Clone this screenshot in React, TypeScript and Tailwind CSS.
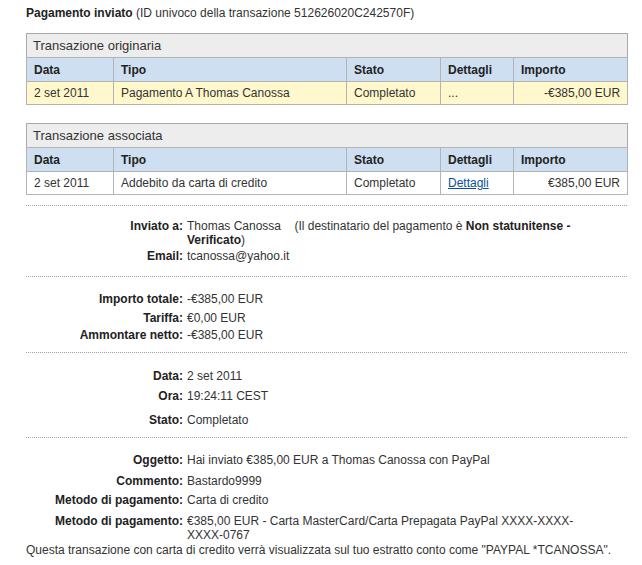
import type { ReactNode } from "react";

type Tx = {
  data: string;
  tipo: string;
  stato: string;
  dettagli: ReactNode;
  importo: string;
};

const cols = ["w-[87px]", "w-[233px]", "w-[94px]", "w-[73px]", "w-[114px]"];

function TxTable({ title, row, rowBg }: { title: string; row: Tx; rowBg: string }) {
  return (
    <table className="w-[601px] border-collapse table-fixed border border-[#a9a9a9]">
      <colgroup>
        {cols.map((c, i) => (
          <col key={i} className={c} />
        ))}
      </colgroup>
      <thead>
        <tr className="h-[24px] bg-[#ededed]">
          <th colSpan={5} className="text-left font-normal text-[13px] pl-[6px] text-[#333]">
            {title}
          </th>
        </tr>
        <tr className="h-[24px] bg-[#cddff0] text-[12px] text-[#222]">
          {["Data", "Tipo", "Stato", "Dettagli", "Importo"].map((h) => (
            <th key={h} className="text-left font-bold pl-[7px] border border-[#b3b3b3]">
              {h}
            </th>
          ))}
        </tr>
      </thead>
      <tbody>
        <tr className={"h-[23px] text-[12px] text-[#333] " + rowBg}>
          <td className="pl-[7px] border border-[#b3b3b3]">{row.data}</td>
          <td className="pl-[7px] border border-[#b3b3b3]">{row.tipo}</td>
          <td className="pl-[7px] border border-[#b3b3b3]">{row.stato}</td>
          <td className="pl-[7px] border border-[#b3b3b3]">{row.dettagli}</td>
          <td className="pr-[7px] text-right border border-[#b3b3b3]">{row.importo}</td>
        </tr>
      </tbody>
    </table>
  );
}

function Field({ label, children, className = "" }: { label: string; children: ReactNode; className?: string }) {
  return (
    <div className={"grid grid-cols-[157px_400px] gap-x-[4px] leading-[14px] " + className}>
      <div className="text-right font-bold text-[#222]">{label}</div>
      <div className="text-[#333]">{children}</div>
    </div>
  );
}

function Divider() {
  return <div className="w-[601px] border-t border-dotted border-[#a3a3a3]" />;
}

export default function App() {
  return (
    <div className="bg-white min-h-[565px] w-[642px] font-['Liberation_Sans',Arial,sans-serif] text-[12px] text-[#333]">
      <div className="pl-[26px] pt-[6px]">
        <div className="leading-[14px] text-[#222]">
          <span className="font-bold">Pagamento inviato</span>{" "}
          <span className="text-[#333]">(ID univoco della transazione 512626020C242570F)</span>
        </div>

        <div className="mt-[13px]">
          <TxTable
            title="Transazione originaria"
            rowBg="bg-[#fff8cc]"
            row={{
              data: "2 set 2011",
              tipo: "Pagamento A Thomas Canossa",
              stato: "Completato",
              dettagli: "...",
              importo: "-€385,00 EUR",
            }}
          />
        </div>

        <div className="mt-[18px]">
          <TxTable
            title="Transazione associata"
            rowBg="bg-white"
            row={{
              data: "2 set 2011",
              tipo: "Addebito da carta di credito",
              stato: "Completato",
              dettagli: (
                <a href="#" className="text-[#084f9c] underline">
                  Dettagli
                </a>
              ),
              importo: "€385,00 EUR",
            }}
          />
        </div>

        <div className="mt-[10px]">
          <Divider />
        </div>

        <div className="pt-[13px] pb-[13px]">
          <Field label="Inviato a:">
            Thomas Canossa{"\u00a0\u00a0\u00a0\u00a0"}(Il destinatario del pagamento è{" "}
            <b className="text-[#222]">Non statunitense -</b> <b className="text-[#222]">Verificato</b>)
          </Field>
          <Field label="Email:" className="mt-[2px]">
            tcanossa@yahoo.it
          </Field>
        </div>

        <Divider />

        <div className="pt-[15px] pb-[10px]">
          <Field label="Importo totale:">-€385,00 EUR</Field>
          <Field label="Tariffa:" className="mt-[5px]">
            €0,00 EUR
          </Field>
          <Field label="Ammontare netto:" className="mt-[3px]">
            -€385,00 EUR
          </Field>
        </div>

        <Divider />

        <div className="pt-[16px] pb-[10px]">
          <Field label="Data:">2 set 2011</Field>
          <Field label="Ora:" className="mt-[6px]">
            19:24:11 CEST
          </Field>
          <Field label="Stato:" className="mt-[10px]">
            Completato
          </Field>
        </div>

        <Divider />

        <div className="pt-[15px]">
          <Field label="Oggetto:">Hai inviato €385,00 EUR a Thomas Canossa con PayPal</Field>
          <Field label="Commento:" className="mt-[7px]">
            Bastardo9999
          </Field>
          <Field label="Metodo di pagamento:" className="mt-[5px]">
            Carta di credito
          </Field>
          <Field label="Metodo di pagamento:" className="mt-[7px]">
            €385,00 EUR - Carta MasterCard/Carta Prepagata PayPal XXXX-XXXX-XXXX-0767
          </Field>
        </div>
      </div>
      <div className="pl-[26px] leading-[14px] mt-[1px]">
        Questa transazione con carta di credito verrà visualizzata sul tuo estratto conto come "PAYPAL *TCANOSSA".
      </div>
    </div>
  );
}
